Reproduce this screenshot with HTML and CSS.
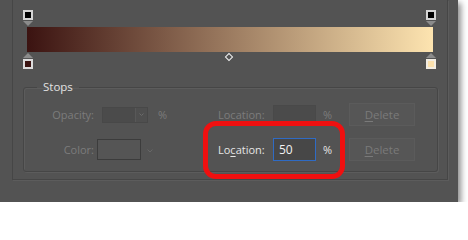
FILE: index.html
```html
<!DOCTYPE html>
<html>
<head>
<meta charset="utf-8">
<link rel="stylesheet" href="styles.css">
</head>
<body>
<div class="panel">
  <div class="frame">
    <div class="ramp">
      <div class="bar"></div>
      <span class="stop stop-top at-start"><i class="sq c-black"></i><i class="tri tri-down"></i></span>
      <span class="stop stop-top at-end"><i class="sq c-black"></i><i class="tri tri-down"></i></span>
      <span class="stop stop-bottom at-start"><i class="tri tri-up"></i><i class="sq c-dark"></i></span>
      <span class="stop stop-bottom at-end"><i class="tri tri-up"></i><i class="sq c-peach"></i></span>
      <span class="midpoint"></span>
    </div>
    <fieldset class="stops">
      <legend>Stops</legend>
      <div class="row">
        <span class="lbl1 dis">Opacity:</span>
        <span class="slot1">
          <span class="opac"><span class="opac-val"></span><span class="opac-dd"><svg width="5" height="3" viewBox="0 0 5 3"><polyline points="0.5,0.5 2.5,2.5 4.5,0.5" fill="none" stroke="#6a6a6a" stroke-width="1"/></svg></span></span>
        </span>
        <span class="pct1 dis">%</span>
        <span class="lbl2 dis">Location:</span>
        <span class="inp inp-dis"></span>
        <span class="pct2 dis">%</span>
        <button class="btn" disabled><u>D</u>elete</button>
      </div>
      <div class="row row2">
        <span class="lbl1 dis">Color:</span>
        <span class="slot1">
          <span class="swatch"></span>
          <svg class="chev" width="6" height="4" viewBox="0 0 6 4"><polyline points="0.5,0.5 3,3 5.5,0.5" fill="none" stroke="#676767" stroke-width="1"/></svg>
        </span>
        <span class="pct1"></span>
        <span class="lbl2 act">Lo<u>c</u>ation:</span>
        <span class="inp inp-act">50</span>
        <span class="pct2 act">%</span>
        <button class="btn" disabled><u>D</u>elete</button>
      </div>
    </fieldset>
  </div>
  <div class="callout"></div>
</div>
</body>
</html>
```

FILE: styles.css
```css
html, body {
  margin: 0;
  padding: 0;
  background: #ffffff;
}

body {
  font-family: "Open Sans", "Noto Sans", sans-serif;
  font-size: 11px;
  overflow: hidden;
}

.panel {
  position: relative;
  width: 458px;
  height: 202px;
  background: #535353;
  box-shadow: 3px 3px 6px rgba(0, 0, 0, 0.45);
  overflow: visible;
}

.frame {
  margin-left: 12px;
  width: 436px;
  box-sizing: border-box;
  border: 1px solid #464646;
  border-top: none;
  padding-bottom: 7px;
  box-shadow: 1px 1px 0 #5c5c5c;
}

.ramp {
  position: relative;
  height: 72px;
  padding-top: 27px;
  box-sizing: border-box;
}

.bar {
  margin-left: 14px;
  width: 406px;
  height: 25px;
  background: linear-gradient(to right, #3b1311, #fde4b0);
}

.stop {
  position: absolute;
  display: flex;
  flex-direction: column;
  align-items: center;
  width: 10px;
}

.stop-top { top: 10px; }
.stop-bottom { top: 53px; }
.at-start { left: 10px; }
.at-end { left: 413px; }

.sq {
  display: block;
  width: 10px;
  height: 10px;
  box-sizing: border-box;
  border: 2px solid #d4d4d4;
}

.c-black { background: #000000; }
.c-dark { background: #3b1311; border-color: #dcdcdc; }
.c-peach { background: #fbe0ac; border-color: #f2ece2; }

.tri {
  display: block;
  width: 0;
  height: 0;
  border-left: 5px solid transparent;
  border-right: 5px solid transparent;
}

.tri-down {
  border-top: 5px solid #8b8b8b;
  margin-top: 1px;
}

.tri-up {
  border-bottom: 5px solid #8b8b8b;
  margin-bottom: 1px;
}

.midpoint {
  position: absolute;
  left: 213px;
  top: 54px;
  width: 4px;
  height: 4px;
  border: 1px solid #f2f2f2;
  transform: rotate(45deg);
}

.stops {
  margin: 7px 9px 0 10px;
  padding: 8px 0 10px 0;
  border: 1px solid #464646;
  border-radius: 3px;
  box-shadow: 1px 1px 0 #5c5c5c, inset 1px 1px 0 #5c5c5c;
  min-width: 0;
}

.stops legend {
  margin-left: 13px;
  padding: 0 6px;
  line-height: 16px;
  color: #e2e2e2;
  font-size: 11.5px;
}

.row {
  display: flex;
  align-items: center;
  height: 23px;
}

.row2 {
  margin-top: 12px;
}

.dis { color: #7c7c7c; }
.act { color: #e6e6e6; }

.lbl1 {
  width: 70px;
  text-align: right;
}

.slot1 {
  width: 64px;
  display: flex;
  align-items: center;
}

.opac {
  margin-left: 8px;
  width: 46px;
  height: 16px;
  display: flex;
  box-sizing: border-box;
  border: 1px solid #484848;
  background: #4b4b4b;
}

.opac-val {
  flex: 1;
  border-right: 1px solid #585858;
}

.opac-dd {
  width: 11px;
  display: flex;
  align-items: center;
  justify-content: center;
  background: #4f4f4f;
}

.swatch {
  margin-left: 3px;
  width: 44px;
  height: 21px;
  box-sizing: border-box;
  border: 1px solid #3c3c3c;
  background: #555555;
}

.chev {
  margin-left: 6px;
  margin-top: 2px;
}

.pct1 {
  width: 60px;
}

.lbl2 {
  width: 55px;
}

.lbl2 u {
  text-decoration-thickness: 1px;
  text-underline-offset: 2px;
}

.inp {
  width: 43px;
  box-sizing: border-box;
  display: flex;
  align-items: center;
  padding-left: 5px;
}

.inp-dis {
  height: 20px;
  border: 1px solid #494949;
  background: #4b4b4b;
}

.inp-act {
  height: 23px;
  border: 1px solid #2f6bc4;
  background: #474747;
  color: #f2f2f2;
  font-size: 12px;
}

.pct2 {
  margin-left: 7px;
  width: 26px;
}

.btn {
  width: 66px;
  height: 23px;
  margin: 0;
  padding: 0;
  box-sizing: border-box;
  border: 1px solid #5b5b5b;
  background: #565656;
  color: #7a7a7a;
  font-family: inherit;
  font-size: 11.5px;
}

.btn u {
  text-underline-offset: 2px;
}

.callout {
  position: absolute;
  left: 203px;
  top: 121px;
  width: 142px;
  height: 58px;
  box-sizing: border-box;
  border: 5px solid #f01010;
  border-radius: 13px;
}
```
